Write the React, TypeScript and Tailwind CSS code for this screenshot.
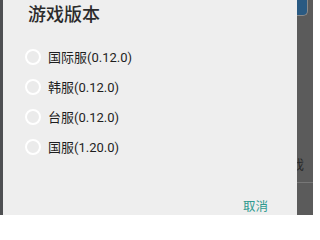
import React from "react";

const options = ["国际服(0.12.0)", "韩服(0.12.0)", "台服(0.12.0)", "国服(1.20.0)"];

export default function App() {
  return (
    <div
      className="w-[313px] h-[215px] flex bg-[#5b5b5b] overflow-hidden"
      style={{ fontFamily: "Roboto, 'Noto Sans CJK SC', sans-serif" }}
    >
      <div className="w-[3px] h-full bg-[#4e4f52]" />
      <div className="relative z-10 w-[294px] h-full bg-[#eeeeee] flex flex-col">
        <div className="h-[28px] pl-[25px] flex items-center text-[18px] leading-none font-medium text-[#2b2b2b] pt-[1px]">
          游戏版本
        </div>
        <div className="mt-[14px] flex flex-col">
          {options.map((o) => (
            <div key={o} className="h-[30px] flex items-center pl-[22px]">
              <div className="w-[16px] h-[16px] rounded-full border-2 border-white bg-[#ebebeb]" />
              <span className="ml-[7px] text-[13px] leading-none text-[#1e1e1e]">{o}</span>
            </div>
          ))}
        </div>
        <div className="flex-1" />
        <div className="h-[15px] flex items-center justify-end pr-[29px]">
          <span className="text-[12.5px] leading-none text-[#2e9a8f]">取消</span>
        </div>
      </div>
      <div className="flex-1 h-full flex flex-col">
        <div className="h-[16px] w-[11px] rounded-br-[5px] bg-[#2a5a82] border-r border-b border-[#8a8a8a]" />
        <div className="mt-[142px] text-[13px] leading-none text-[#2a2a2a] -ml-[6px]">戏</div>
        <div className="mt-[11px] h-px w-full bg-[#777777]" />
      </div>
    </div>
  );
}
